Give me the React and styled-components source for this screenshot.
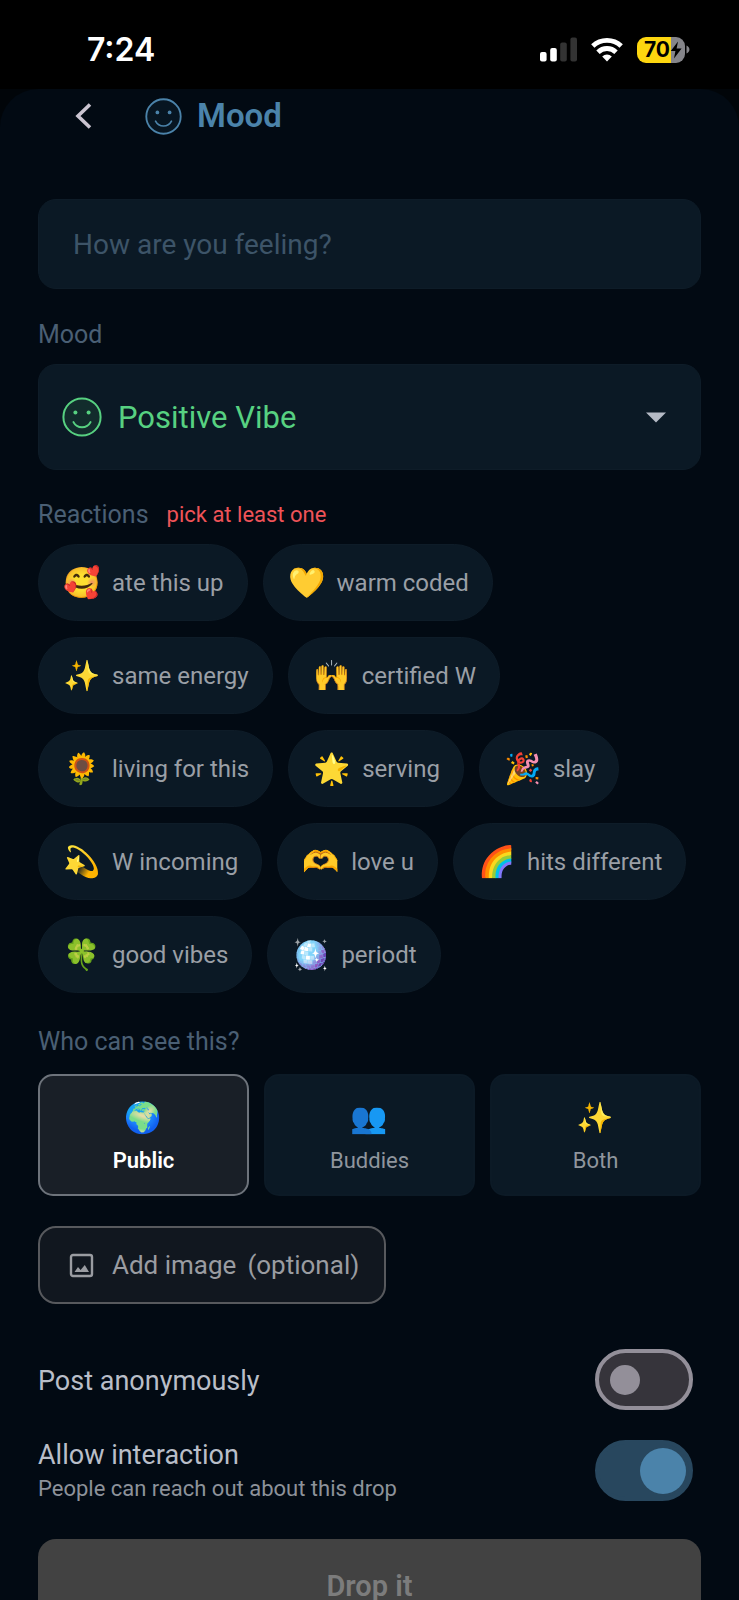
import { useState } from 'react';
import styled, { createGlobalStyle } from 'styled-components';

const GlobalStyle = createGlobalStyle`
    * {
        box-sizing: border-box;
    }

    body {
        margin: 0;
        background: #000;
        font-family: Roboto, sans-serif;
    }

    button, input, select {
        font-family: inherit;
        margin: 0;
    }
`;

const Screen = styled.div`
    display: flex;
    flex-direction: column;
    height: 100vh;
    background: #010509;
`;

const StatusBar = styled.header`
    display: flex;
    flex-shrink: 0;
    align-items: center;
    justify-content: space-between;
    height: 89px;
    padding: 10px 49px 0 87px;
    background: #000;
`;

const Clock = styled.time`
    color: #fff;
    font-family: Inter, sans-serif;
    font-size: 32px;
    font-weight: 600;
    line-height: 40px;
`;

const StatusIcons = styled.div`
    display: flex;
    align-items: center;
    gap: 14px;
`;

const Battery = styled.div`
    display: flex;
    align-items: center;
    gap: 1px;
`;

const BatteryBody = styled.div`
    display: flex;
    align-items: center;
    justify-content: flex-end;
    width: 48px;
    height: 26px;
    padding-right: 3px;
    border-radius: 9px;
    background: linear-gradient(to right, #fdd60f 70%, #85858a 70%);
    color: #000;
    font-family: Inter, sans-serif;
    font-size: 21px;
    font-weight: 700;
    line-height: 26px;
`;

const Sheet = styled.main`
    flex: 1;
    min-height: 0;
    overflow-y: auto;
    scrollbar-width: none;
    padding: 0 38px 40px;
    border-radius: 38px 38px 0 0;
    background: #020a13;
`;

const TopBar = styled.div`
    display: flex;
    align-items: center;
    height: 54px;
    padding-left: 36px;
    margin-bottom: 56px;
`;

const BackButton = styled.button`
    display: flex;
    padding: 0;
    border: 0;
    background: none;
    cursor: pointer;
`;

const Title = styled.h1`
    display: flex;
    align-items: center;
    gap: 15px;
    margin: 0 0 0 53px;
    color: #4b83aa;
    font-size: 33px;
    font-weight: 600;
    line-height: 40px;
`;

const FeelingInput = styled.input`
    display: block;
    width: 100%;
    height: 90px;
    padding: 0 34px;
    border: 1px solid #0e1c28;
    border-radius: 18px;
    outline: none;
    background: #0b1925;
    color: #d5dae1;
    font-size: 28px;

    &::placeholder {
        color: #3d5468;
        opacity: 1;
    }
`;

const FieldHead = styled.div`
    display: flex;
    align-items: center;
    gap: 18px;
    height: 32px;
    margin: ${(props) => props.$top}px 0 ${(props) => props.$bottom}px;
`;

const FieldLabel = styled.label`
    color: #4a5f74;
    font-size: 25px;
    line-height: 32px;
`;

const Hint = styled.span`
    color: #ef5358;
    font-size: 22px;
    line-height: 32px;
`;

const SelectBox = styled.div`
    display: flex;
    align-items: center;
    gap: 16px;
    height: 106px;
    padding: 0 34px 0 23px;
    border: 1px solid #0e1c28;
    border-radius: 18px;
    background: #0b1925;
`;

const MoodSelect = styled.select`
    flex: 1;
    min-width: 0;
    height: 60px;
    padding: 0;
    border: 0;
    outline: none;
    appearance: none;
    background: none;
    color: #57d181;
    font-size: 31px;
    cursor: pointer;
`;

const Chips = styled.div`
    display: flex;
    flex-wrap: wrap;
    gap: 16px 15px;
`;

const Chip = styled.button`
    display: flex;
    align-items: center;
    gap: 12px;
    height: 77px;
    padding: 0 23px 0 25px;
    border: 1px solid ${(props) => (props.$on ? '#6d737b' : '#0e1c28')};
    border-radius: 39px;
    background: #0b1925;
    color: #9a9fa6;
    font-size: 24px;
    line-height: 32px;
    cursor: pointer;
`;

const Emoji = styled.span`
    display: flex;
    align-items: center;
    justify-content: center;
    width: 36px;
    height: 36px;
    font-family: "Noto Color Emoji", sans-serif;
    font-size: 30px;
    line-height: 36px;
`;

const Audience = styled.div`
    display: grid;
    grid-template-columns: repeat(3, 1fr);
    gap: 15px;
`;

const AudienceCard = styled.button`
    display: flex;
    flex-direction: column;
    align-items: center;
    justify-content: center;
    gap: 11px;
    height: 122px;
    padding: 5px 0 0;
    border: 2px solid ${(props) => (props.$on ? '#6d737b' : '#0c1a26')};
    border-radius: 15px;
    background: ${(props) => (props.$on ? '#191f27' : '#0b1925')};
    color: ${(props) => (props.$on ? '#fff' : '#8f959d')};
    font-size: 22px;
    font-weight: ${(props) => (props.$on ? 600 : 400)};
    line-height: 28px;
    cursor: pointer;
`;

const AddImage = styled.button`
    display: flex;
    align-items: center;
    gap: 16px;
    height: 78px;
    margin: 30px 0 45px;
    padding: 0 25px 0 27px;
    border: 2px solid #57595d;
    border-radius: 18px;
    background: #11171f;
    color: #9a9ca1;
    font-size: 26px;
    line-height: 32px;
    cursor: pointer;
`;

const AddImageText = styled.span`
    display: flex;
    gap: 11px;
`;

const SettingRow = styled.label`
    display: flex;
    align-items: center;
    justify-content: space-between;
    height: 61px;
    margin-bottom: ${(props) => props.$bottom}px;
    padding-right: 8px;
    cursor: pointer;
`;

const SettingText = styled.span`
    display: flex;
    flex-direction: column;
    padding-top: 2px;
    color: #b9bec8;
    font-size: 27px;
    line-height: 34px;
`;

const SettingNote = styled.small`
    color: #8d929a;
    font-size: 22px;
    line-height: 34px;
`;

const Switch = styled.input`
    display: flex;
    align-items: center;
    flex-shrink: 0;
    width: 98px;
    height: 61px;
    padding: 0 11px;
    border: 4px solid #938f99;
    border-radius: 31px;
    appearance: none;
    background: #36343b;
    cursor: pointer;

    &::before {
        content: '';
        width: 30px;
        height: 30px;
        border-radius: 50%;
        background: #938f99;
    }

    &:checked {
        justify-content: flex-end;
        padding: 0 3px;
        border-color: #28475e;
        background: #28475e;
    }

    &:checked::before {
        width: 46px;
        height: 46px;
        background: #4b83aa;
    }
`;

const DropButton = styled.button`
    display: block;
    width: 100%;
    height: 93px;
    border: 0;
    border-radius: 18px;
    background: #424242;
    color: #7c7c7c;
    font-size: 29px;
    font-weight: 600;
`;

const reactions = [
    { emoji: '🥰', text: 'ate this up' },
    { emoji: '💛', text: 'warm coded' },
    { emoji: '✨', text: 'same energy' },
    { emoji: '🙌', text: 'certified W' },
    { emoji: '🌻', text: 'living for this' },
    { emoji: '🌟', text: 'serving' },
    { emoji: '🎉', text: 'slay' },
    { emoji: '💫', text: 'W incoming' },
    { emoji: '🫶', text: 'love u' },
    { emoji: '🌈', text: 'hits different' },
    { emoji: '🍀', text: 'good vibes' },
    { emoji: '🪩', text: 'periodt' },
];

const audiences = [
    { emoji: '🌍', text: 'Public' },
    { emoji: '👥', text: 'Buddies' },
    { emoji: '✨', text: 'Both' },
];

function Smiley({ size, color, fill }) {
    return (
        <svg width={size} height={size} viewBox="0 0 40 40" fill="none" stroke={color} aria-hidden="true">
            <circle cx="20" cy="20" r="18.6" strokeWidth="2" fill={fill} />
            <circle cx="13.4" cy="15.6" r="2" fill={color} stroke="none" />
            <circle cx="26.6" cy="15.6" r="2" fill={color} stroke="none" />
            <path d="M11.4 25C15 32 25 32 28.6 25" strokeWidth="1.8" strokeLinecap="round" />
        </svg>
    );
}

function App() {
    const [feeling, setFeeling] = useState('');
    const [mood, setMood] = useState('positive');
    const [picked, setPicked] = useState([]);
    const [audience, setAudience] = useState('Public');

    const toggleReaction = (text) => {
        setPicked(picked.includes(text) ? picked.filter((p) => p !== text) : [...picked, text]);
    };

    return (
        <>
            <GlobalStyle />
            <Screen>
                <StatusBar>
                    <Clock>7:24</Clock>
                    <StatusIcons>
                        <svg width="37" height="25" viewBox="0 0 37 25" fill="#fff" aria-hidden="true">
                            <rect x="0" y="15" width="6.6" height="9.5" rx="2" />
                            <rect x="10.2" y="11" width="6.6" height="13.5" rx="2" />
                            <rect x="20.2" y="5.5" width="6.6" height="19" rx="2" fill="#333" />
                            <rect x="30.4" y="0.5" width="6.6" height="24" rx="2" fill="#333" />
                        </svg>
                        <svg width="32" height="25" viewBox="0 0 32 25" aria-hidden="true">
                            <g fill="none" stroke="#fff" strokeWidth="4.8">
                                <path d="M1.8 9A20.6 20.6 0 0 1 30.2 9" />
                                <path d="M7 15.2A12.8 12.8 0 0 1 25 15.2" />
                            </g>
                            <path d="M11.2 19.4A7 7 0 0 1 20.8 19.4L16 24.4Z" fill="#fff" />
                        </svg>
                        <Battery>
                            <BatteryBody>
                                70
                                <svg width="12" height="18" viewBox="0 0 12 18" aria-hidden="true">
                                    <path d="M8 0.5L0.8 10H5.4L4 17.5L11.6 7.4H6.6Z" fill="#000" />
                                </svg>
                            </BatteryBody>
                            <svg width="4" height="9" viewBox="0 0 4 9" aria-hidden="true">
                                <path d="M0.5 0.5C4.4 2 4.4 7 0.5 8.5Z" fill="#85858a" />
                            </svg>
                        </Battery>
                    </StatusIcons>
                </StatusBar>

                <Sheet>
                    <TopBar>
                        <BackButton type="button" aria-label="Back">
                            <svg width="18" height="26" viewBox="0 0 18 26" fill="none" aria-hidden="true">
                                <path d="M16 1.5L4 13L16 24.5" stroke="#cac4d0" strokeWidth="3.6" />
                            </svg>
                        </BackButton>
                        <Title>
                            <Smiley size={37} color="#4b83aa" fill="#071521" />
                            Mood
                        </Title>
                    </TopBar>

                    <FeelingInput
                        type="text"
                        aria-label="How are you feeling?"
                        placeholder="How are you feeling?"
                        value={feeling}
                        onChange={(e) => setFeeling(e.target.value)}
                    />

                    <FieldHead $top={30} $bottom={13}>
                        <FieldLabel htmlFor="mood">Mood</FieldLabel>
                    </FieldHead>
                    <SelectBox>
                        <Smiley size={40} color="#57d181" fill="#122c2c" />
                        <MoodSelect id="mood" value={mood} onChange={(e) => setMood(e.target.value)}>
                            <option value="positive">Positive Vibe</option>
                        </MoodSelect>
                        <svg width="20" height="11" viewBox="0 0 20 11" aria-hidden="true">
                            <path d="M0 0.5H20L10 10.5Z" fill="#b5bac5" />
                        </svg>
                    </SelectBox>

                    <FieldHead $top={29} $bottom={13}>
                        <FieldLabel as="span" id="reactions">Reactions</FieldLabel>
                        <Hint>pick at least one</Hint>
                    </FieldHead>
                    <Chips role="group" aria-labelledby="reactions">
                        {reactions.map((item) => (
                            <Chip
                                key={item.text}
                                type="button"
                                $on={picked.includes(item.text)}
                                aria-pressed={picked.includes(item.text)}
                                onClick={() => toggleReaction(item.text)}
                            >
                                <Emoji>{item.emoji}</Emoji>
                                {item.text}
                            </Chip>
                        ))}
                    </Chips>

                    <FieldHead $top={33} $bottom={16}>
                        <FieldLabel as="span" id="audience">Who can see this?</FieldLabel>
                    </FieldHead>
                    <Audience role="group" aria-labelledby="audience">
                        {audiences.map((item) => (
                            <AudienceCard
                                key={item.text}
                                type="button"
                                $on={audience === item.text}
                                aria-pressed={audience === item.text}
                                onClick={() => setAudience(item.text)}
                            >
                                <Emoji>{item.emoji}</Emoji>
                                {item.text}
                            </AudienceCard>
                        ))}
                    </Audience>

                    <AddImage type="button">
                        <svg width="29" height="29" viewBox="0 0 29 29" fill="none" aria-hidden="true">
                            <rect x="4" y="4" width="21" height="21" rx="2" stroke="#9a9ca1" strokeWidth="2.4" />
                            <path d="M7.5 21L11 16L13.6 19L17.8 14L22 21Z" fill="#9a9ca1" />
                        </svg>
                        <AddImageText>
                            <span>Add image</span>
                            <span>(optional)</span>
                        </AddImageText>
                    </AddImage>

                    <SettingRow $bottom={30}>
                        <SettingText>Post anonymously</SettingText>
                        <Switch type="checkbox" role="switch" />
                    </SettingRow>
                    <SettingRow $bottom={38}>
                        <SettingText>
                            Allow interaction
                            <SettingNote>People can reach out about this drop</SettingNote>
                        </SettingText>
                        <Switch type="checkbox" role="switch" defaultChecked />
                    </SettingRow>

                    <DropButton type="button" disabled={picked.length === 0}>Drop it</DropButton>
                </Sheet>
            </Screen>
        </>
    );
}

export default App;
